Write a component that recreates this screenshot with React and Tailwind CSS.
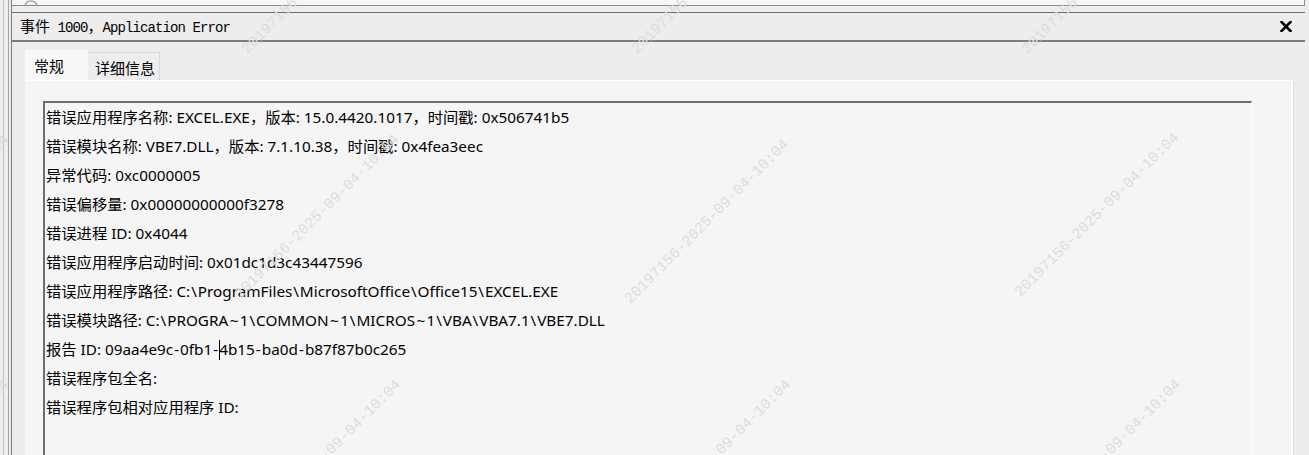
import React from "react";

const lines = [
  "错误应用程序名称: EXCEL.EXE，版本: 15.0.4420.1017，时间戳: 0x506741b5",
  "错误模块名称: VBE7.DLL，版本: 7.1.10.38，时间戳: 0x4fea3eec",
  "异常代码: 0xc0000005",
  "错误偏移量: 0x00000000000f3278",
  "错误进程 ID: 0x4044",
  "错误应用程序启动时间: 0x01dc1d3c43447596",
  "错误应用程序路径: C:\\ProgramFiles\\MicrosoftOffice\\Office15\\EXCEL.EXE",
  "错误模块路径: C:\\PROGRA~1\\COMMON~1\\MICROS~1\\VBA\\VBA7.1\\VBE7.DLL",
];

function Seg({ text }) {
  return text.split(/([\\~-])/).map((p, i) => {
    if (p === "\\") return <span key={i} className="px-[0.9px]">{p}</span>;
    if (p === "~") return <span key={i} className="px-[1.4px]">{p}</span>;
    if (p === "-") return <span key={i} className="px-[1px]">{p}</span>;
    return <React.Fragment key={i}>{p}</React.Fragment>;
  });
}

const WM = "20197156-2025-09-04-10:04";
const wmCls =
  "pointer-events-none absolute origin-bottom-left -rotate-45 whitespace-nowrap font-['Liberation_Mono',monospace] text-[15px] leading-[15px] text-[#dcdcdc]";

export default function App() {
  return (
    <div className="relative flex h-[455px] w-[1309px] overflow-hidden bg-[#ededed] font-['Noto_Sans','Noto_Sans_CJK_SC',sans-serif] text-black">
      {/* left gutter lines */}
      <div className="flex h-full w-[12px] shrink-0">
        <div className="w-[3px]" />
        <div className="w-px bg-[#c2c2c2]" />
        <div className="w-[4px]" />
        <div className="w-px bg-[#a6a6a6]" />
        <div className="w-[2px]" />
        <div className="w-px bg-[#7c7c7c]" />
      </div>

      {/* main column */}
      <div className="flex min-w-0 flex-1 flex-col">
        {/* top strip of previous box */}
        <div className="mr-[4px] flex h-[6px] shrink-0 overflow-hidden border-r border-b border-[#8c8c8c] bg-[#f7f7f7]">
          <svg width="14" height="5" viewBox="0 0 14 5" className="ml-[12px] shrink-0">
            <path d="M1 5 A6.5 6.5 0 0 1 13 5" fill="none" stroke="#8a8a8a" strokeWidth="1.2" />
          </svg>
        </div>
        <div className="h-[6px] shrink-0" />

        {/* title bar */}
        <div className="mr-[4px] flex h-[30px] shrink-0 items-center justify-between border-t border-b-2 border-t-[#6c6c6c] border-b-[#7e7e7e] pl-[8px] pr-[13px]">
          <div className="flex items-baseline leading-none">
            <span className="font-['Noto_Sans_CJK_SC',sans-serif] text-[15px]">事件</span>
            <span className="font-['Liberation_Mono',monospace] text-[14px] tracking-[-0.9px] whitespace-pre"> 1000</span>
            <span className="font-['Noto_Sans_CJK_SC',sans-serif] text-[15px]">，</span>
            <span className="font-['Liberation_Mono',monospace] text-[14px] tracking-[-0.9px] whitespace-pre">Application Error</span>
          </div>
          <svg width="12" height="11" viewBox="0 0 12 11">
            <path d="M1.5 1 L10.5 10 M10.5 1 L1.5 10" stroke="#000" strokeWidth="2.6" strokeLinecap="square" />
          </svg>
        </div>

        {/* tabs */}
        <div className="ml-[13px] mt-[8px] flex h-[30px] shrink-0 items-end">
          <div className="flex h-[30px] w-[63px] items-center bg-[#f8f8f8] pl-[9px] font-['Noto_Sans_CJK_SC',sans-serif] text-[15px] leading-none">
            常规
          </div>
          <div className="flex h-[28px] w-[72px] items-center border-t border-r border-[#d8d8d8] pl-[7px] pt-[2px] font-['Noto_Sans_CJK_SC',sans-serif] text-[15px] leading-none">
            详细信息
          </div>
        </div>

        {/* tab panel */}
        <div className="ml-[13px] mr-[15px] flex min-h-0 flex-1 border-t border-white bg-[#f5f5f5]">
          <div className="flex min-w-0 flex-1 flex-col border-r-2 border-white pl-[18px] pt-[20px]">
            <div className="mr-[39px] flex-1 border-t-2 border-l-2 border-r border-t-[#6e6e6e] border-l-[#6e6e6e] border-r-white pl-px text-[15.3px] leading-[29px]">
              {lines.map((l) => (
                <div key={l} className="whitespace-pre">
                  <Seg text={l} />
                </div>
              ))}
              <div className="whitespace-pre">
                <Seg text="报告 ID: 09aa4e9c-0fb1-" />
                <span className="inline-block h-[20px] w-px -mr-px bg-black align-[-5px]" />
                <Seg text="4b15-ba0d-b87f87b0c265" />
              </div>
              <div className="whitespace-pre">错误程序包全名:</div>
              <div className="whitespace-pre">错误程序包相对应用程序 ID:</div>
            </div>
          </div>
          <div className="w-px bg-[#dcdcdc]" />
        </div>
      </div>

      {/* watermarks */}
      <span className={`${wmCls} left-[250px] top-[42px]`}>{WM}</span>
      <span className={`${wmCls} left-[640px] top-[42px]`}>{WM}</span>
      <span className={`${wmCls} left-[1030px] top-[42px]`}>{WM}</span>
      <span className={`${wmCls} left-[-147px] top-[287px]`}>{WM}</span>
      <span className={`${wmCls} left-[243px] top-[287px]`}>{WM}</span>
      <span className={`${wmCls} left-[633px] top-[292px]`}>{WM}</span>
      <span className={`${wmCls} left-[1023px] top-[285px]`}>{WM}</span>
      <span className={`${wmCls} left-[-147px] top-[532px]`}>{WM}</span>
      <span className={`${wmCls} left-[245px] top-[532px]`}>{WM}</span>
      <span className={`${wmCls} left-[635px] top-[532px]`}>{WM}</span>
      <span className={`${wmCls} left-[1025px] top-[532px]`}>{WM}</span>
    </div>
  );
}
